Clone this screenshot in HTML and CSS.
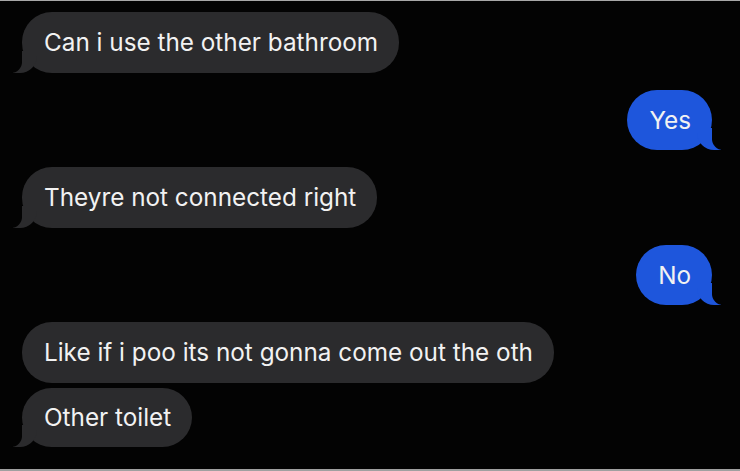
FILE: index.html
```html
<!DOCTYPE html>
<html>
<head>
<meta charset="utf-8">
<link rel="stylesheet" href="styles.css">
</head>
<body>
<div class="screen">
  <div class="thread">
    <div class="msg recv tail g1">Can i use the other bathroom</div>
    <div class="msg sent tail g2">Yes</div>
    <div class="msg recv tail g2">Theyre not connected right</div>
    <div class="msg sent tail g2">No</div>
    <div class="msg recv g2">Like if i poo its not gonna come out the oth</div>
    <div class="msg recv tail g3">Other toilet</div>
  </div>
</div>
</body>
</html>
```
FILE: styles.css
```css
html, body {
  margin: 0;
  padding: 0;
  background: #000;
}
.screen {
  width: 740px;
  height: 471px;
  box-sizing: border-box;
  background: #030303;
  border-top: 1px solid #a8a8a8;
  border-bottom: 2px solid #a0a0a0;
  overflow: hidden;
  font-family: Inter, "Noto Sans", sans-serif;
}
.thread {
  display: flex;
  flex-direction: column;
  padding: 11px 28px 0 22px;
}
.msg {
  position: relative;
  height: 61px;
  box-sizing: border-box;
  display: flex;
  align-items: center;
  padding: 0 21px 1px 22px;
  border-radius: 30px;
  font-size: 24.3px;
  color: #f2f2f2;
  white-space: nowrap;
}
.recv {
  align-self: flex-start;
  background: #2b2b2d;
}
.sent {
  align-self: flex-end;
  background: #1e56dc;
  height: 60px;
}
.g2 { margin-top: 17px; }
.g3 { margin-top: 5px; height: 59px; }

.recv.tail::before {
  content: "";
  position: absolute;
  bottom: 0;
  left: -9px;
  width: 24px;
  height: 22px;
  background: #2b2b2d;
  border-bottom-right-radius: 17px;
}
.recv.tail::after {
  content: "";
  position: absolute;
  bottom: 0;
  left: -12px;
  width: 12px;
  height: 22px;
  background: #030303;
  border-bottom-right-radius: 11px;
}
.sent.tail::before {
  content: "";
  position: absolute;
  bottom: 0;
  right: -9px;
  width: 24px;
  height: 22px;
  background: #1e56dc;
  border-bottom-left-radius: 17px;
}
.sent.tail::after {
  content: "";
  position: absolute;
  bottom: 0;
  right: -12px;
  width: 12px;
  height: 22px;
  background: #030303;
  border-bottom-left-radius: 11px;
}
```
